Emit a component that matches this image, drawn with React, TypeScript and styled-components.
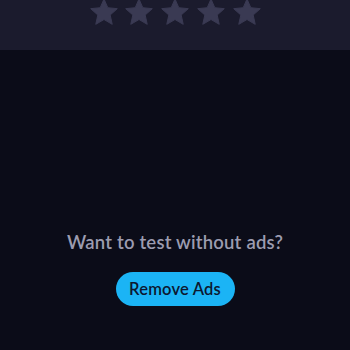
import React from "react";
import styled, { createGlobalStyle } from "styled-components";

const Global = createGlobalStyle`
  html, body { margin: 0; padding: 0; background: #0b0c18; }
  body { font-family: "Lato", "Open Sans", sans-serif; }
`;

const Page = styled.div`
  width: 350px;
  height: 350px;
  display: flex;
  flex-direction: column;
  background: #0b0c18;
  overflow: hidden;
`;

const TopPanel = styled.div`
  height: 50px;
  background: #1b1b2d;
  display: flex;
  justify-content: center;
  align-items: flex-start;
  gap: 5.75px;
`;

const Star = styled.svg`
  width: 30px;
  height: 28px;
  margin-top: -2px;
  fill: #3a3a53;
  stroke: #3a3a53;
  stroke-width: 1;
  stroke-linejoin: round;
`;

const Body = styled.div`
  flex: 1;
  display: flex;
  flex-direction: column;
  align-items: center;
  padding-top: 181px;
`;

const Prompt = styled.div`
  font-size: 18.5px;
  font-weight: 600;
  color: #9c9cb0;
  letter-spacing: 0.2px;
  line-height: 22px;
`;

const RemoveButton = styled.button`
  margin-top: 19px;
  width: 119px;
  height: 34px;
  border: none;
  border-radius: 17px;
  background: #1bb4f5;
  color: #0c1830;
  font-family: "Lato", "Open Sans", sans-serif;
  font-size: 16.5px;
  font-weight: 600;
  letter-spacing: 0.2px;
  padding: 0;
  cursor: pointer;
`;

const StarIcon = () => (
  <Star viewBox="0 0 30 28">
    <path d="M15 1L18.82 9.74L28.31 10.67L21.18 17.01L23.23 26.33L15 21.5L6.77 26.33L8.82 17.01L1.69 10.67L11.18 9.74Z" />
  </Star>
);

export default function App() {
  return (
    <Page>
      <Global />
      <TopPanel>
        {[0, 1, 2, 3, 4].map((i) => (
          <StarIcon key={i} />
        ))}
      </TopPanel>
      <Body>
        <Prompt>Want to test without ads?</Prompt>
        <RemoveButton>Remove Ads</RemoveButton>
      </Body>
    </Page>
  );
}
